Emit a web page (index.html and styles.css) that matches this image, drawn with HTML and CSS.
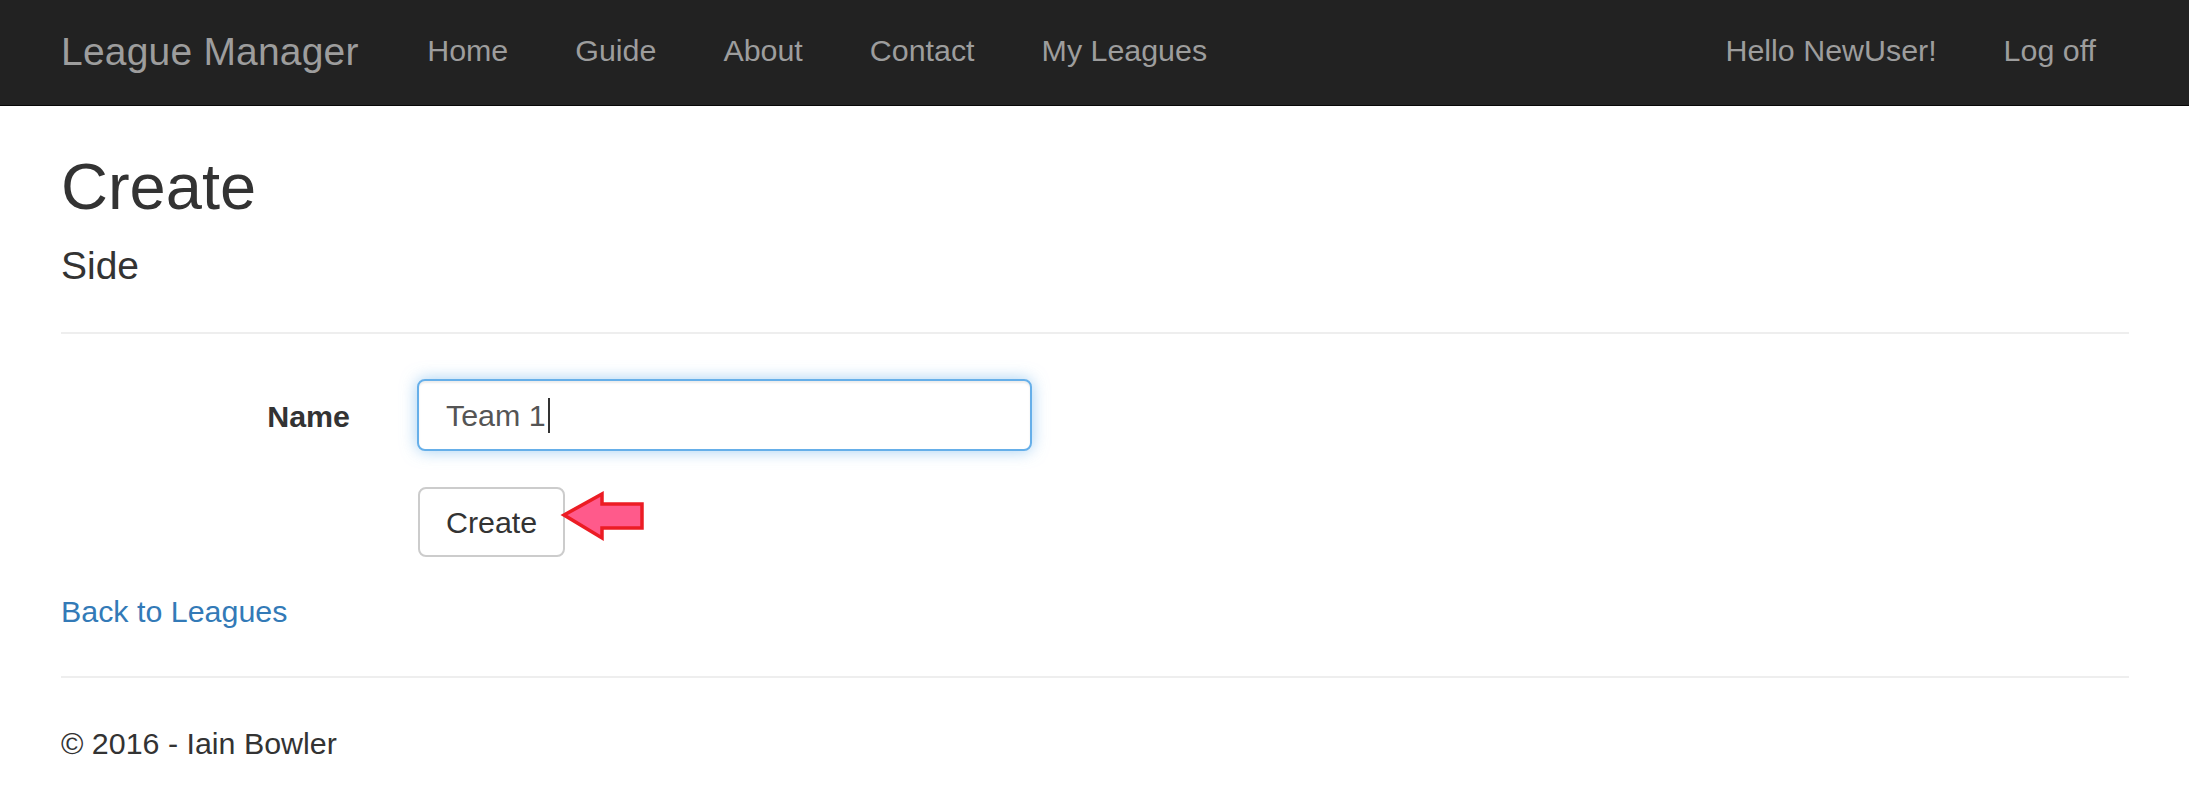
FILE: index.html
```html
<!DOCTYPE html>
<html lang="en">
<head>
<meta charset="utf-8">
<title>Create - League Manager</title>
<link rel="stylesheet" href="styles.css">
</head>
<body>
<nav class="navbar">
  <div class="container nav-inner">
    <a class="brand" href="#">League Manager</a>
    <ul class="nav">
      <li><a href="#">Home</a></li>
      <li><a href="#">Guide</a></li>
      <li><a href="#">About</a></li>
      <li><a href="#">Contact</a></li>
      <li><a href="#">My Leagues</a></li>
    </ul>
    <ul class="nav nav-right">
      <li><a href="#">Hello NewUser!</a></li>
      <li><a href="#">Log off</a></li>
    </ul>
  </div>
</nav>
<main class="container body-content">
  <h2 class="title">Create</h2>
  <h4 class="subtitle">Side</h4>
  <hr class="rule-top">
  <form class="form-horizontal">
    <label class="control-label" for="Name">Name</label>
    <span class="input-wrap">
      <input class="form-control" id="Name" type="text" value="Team 1">
      <span class="caret-line"></span>
    </span>
    <div class="btn-row">
      <span class="btn-wrap">
        <button class="btn" type="button">Create</button>
        <svg class="arrow" width="86" height="52" viewBox="0 0 86 52">
          <polygon points="3,24 41,3 41,13 81,13 81,37 41,37 41,47" fill="#ff5a8b" stroke="#ec1c24" stroke-width="3.5" stroke-linejoin="miter"/>
        </svg>
      </span>
    </div>
  </form>
  <div class="back"><a href="#">Back to Leagues</a></div>
  <hr class="rule-bottom">
  <footer class="footer">
    <p>&copy; 2016 - Iain Bowler</p>
  </footer>
</main>
</body>
</html>
```
FILE: styles.css
```css
* { box-sizing: border-box; }

html, body {
  margin: 0;
  padding: 0;
  background: #fff;
}

body {
  font-family: "Liberation Sans", Arial, Helvetica, sans-serif;
  font-size: 30.4px;
  color: #333;
}

a { text-decoration: none; }

.container {
  padding: 0 60px 0 61px;
}

/* Navbar */
.navbar {
  background: #222;
  border-bottom: 1px solid #080808;
  height: 106px;
}

.nav-inner {
  display: flex;
  align-items: flex-start;
  height: 105px;
}

.brand {
  display: block;
  color: #9d9d9d;
  font-size: 39px;
  letter-spacing: 0.2px;
  padding-top: 0;
  line-height: 103px;
  height: 105px;
}

.nav {
  list-style: none;
  margin: 0 0 0 35px;
  padding: 0;
  display: flex;
}

.nav-right {
  margin-left: auto;
  margin-right: -0.5px;
}

.nav a {
  display: block;
  color: #9d9d9d;
  padding: 0 33.5px;
  line-height: 101px;
  height: 105px;
}

/* Content */
.title {
  font-size: 65px;
  font-weight: normal;
  line-height: 71.5px;
  margin: 44.8px 0 0;
}

.subtitle {
  font-size: 39px;
  font-weight: normal;
  line-height: 42.9px;
  margin: 22.4px 0 0;
}

.rule-top,
.rule-bottom {
  border: 0;
  border-top: 2px solid #eee;
  height: 0;
  margin: 0;
}

.rule-top { margin-top: 44.5px; }

.form-horizontal {
  display: grid;
  grid-template-columns: 289px 615px;
  column-gap: 67px;
  margin-top: 45px;
}

.control-label {
  text-align: right;
  font-weight: bold;
  padding-top: 16px;
  line-height: 42px;
}

.input-wrap {
  position: relative;
  display: block;
}

.form-control {
  display: block;
  width: 615px;
  height: 72px;
  padding: 0 27px;
  font-family: inherit;
  font-size: 30.4px;
  color: #555;
  background: #fff;
  border: 2px solid #66afe9;
  border-radius: 8px;
  outline: 0;
  box-shadow: inset 0 2px 2px rgba(0, 0, 0, .075), 0 0 16px rgba(102, 175, 233, .6);
}

.caret-line {
  position: absolute;
  left: 131px;
  top: 19px;
  width: 2px;
  height: 35px;
  background: #333;
}

.btn-row {
  grid-column: 2;
  margin-top: 36px;
}

.btn-wrap {
  position: relative;
  display: inline-block;
  margin-left: 1px;
}

.btn {
  display: block;
  height: 70px;
  padding: 0 26px;
  font-family: inherit;
  font-size: 30.4px;
  color: #333;
  background: #fff;
  border: 2px solid #ccc;
  border-radius: 8px;
}

.arrow {
  position: absolute;
  left: 143px;
  top: 4px;
  overflow: visible;
}

.back {
  margin-top: 33px;
  line-height: 43.4px;
}

.back a { color: #337ab7; }

.rule-bottom { margin-top: 42.6px; }

.footer p {
  margin: 44.3px 0 0;
  line-height: 43.4px;
}
```
